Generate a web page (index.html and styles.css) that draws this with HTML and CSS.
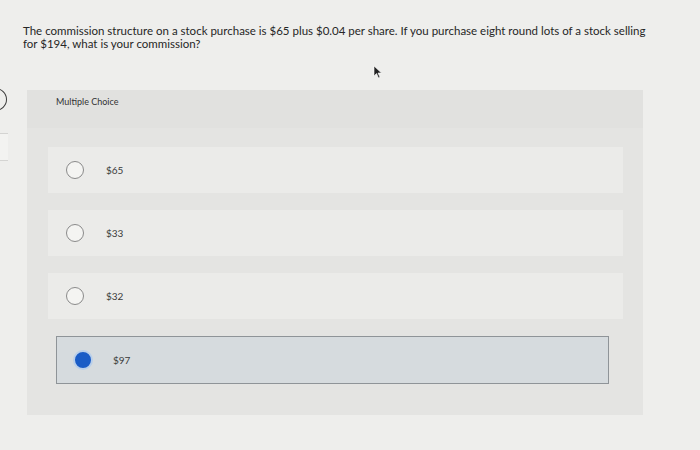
FILE: index.html
```html
<!DOCTYPE html>
<html>
<head>
<meta charset="utf-8">
<link rel="stylesheet" href="styles.css">
</head>
<body>
<div class="page">
  <aside class="rail">
    <div class="rail-step"></div>
    <div class="rail-box"></div>
  </aside>
  <main class="main">
    <p class="question">The commission structure on a stock purchase is $65 plus $0.04 per share. If you purchase eight round lots of a stock selling for $194, what is your commission?</p>
    <div class="pointer-row">
      <svg class="pointer" width="10" height="14" viewBox="0 0 10 14"><path d="M1 1 L1 11 L3.5 8.5 L5.5 13 L7 12.3 L5 8 L8.5 8 Z" fill="#222" stroke="#fff" stroke-width="0.6"/></svg>
    </div>
    <section class="panel">
      <div class="panel-head">Multiple Choice</div>
      <div class="options">
        <div class="option"><span class="radio"></span><span class="label">$65</span></div>
        <div class="option"><span class="radio"></span><span class="label">$33</span></div>
        <div class="option"><span class="radio"></span><span class="label">$32</span></div>
        <div class="option selected"><span class="radio"></span><span class="label">$97</span></div>
      </div>
    </section>
  </main>
</div>
</body>
</html>
```
FILE: styles.css
```css
html, body {
  margin: 0;
  padding: 0;
  width: 700px;
  height: 450px;
  overflow: hidden;
  background: #eeeeec;
  font-family: Lato, "Liberation Sans", sans-serif;
  color: #2b2b2b;
}
.page {
  display: flex;
  height: 450px;
}
.rail {
  width: 8px;
  flex: none;
  overflow: hidden;
  padding-top: 88px;
}
.rail-step {
  width: 24px;
  height: 23px;
  margin-left: -17px;
  border: 1.5px solid #3a3a3a;
  border-radius: 50%;
  box-sizing: border-box;
}
.rail-box {
  width: 16px;
  height: 26px;
  margin-top: 22px;
  margin-left: -8px;
  border: 1px solid #d4d4d2;
  background: #f3f3f1;
}
.main {
  flex: 1;
  padding: 24px 0 0 15px;
}
.question {
  margin: 0;
  width: 632px;
  font-size: 11.5px;
  line-height: 13px;
  color: #262626;
}
.pointer-row {
  height: 40px;
  position: relative;
}
.pointer {
  position: absolute;
  left: 350px;
  top: 15px;
}
.panel {
  margin-left: 4px;
  width: 616px;
  background: #e4e4e2;
  padding-bottom: 31px;
}
.panel-head {
  height: 38px;
  padding: 6px 0 0 29px;
  font-size: 9px;
  line-height: 12px;
  color: #333;
  background: #e1e1df;
  box-sizing: border-box;
}
.options {
  display: flex;
  flex-direction: column;
  gap: 17px;
  padding: 19px 20px 0 21px;
}
.option {
  height: 46px;
  background: #ebebe9;
  display: flex;
  align-items: center;
  padding-left: 18px;
  box-sizing: border-box;
}
.radio {
  width: 18px;
  height: 18px;
  border: 1.3px solid #8a8a8a;
  border-radius: 50%;
  box-sizing: border-box;
  background: #f4f4f2;
  flex: none;
}
.label {
  margin-left: 22px;
  font-size: 10px;
  color: #3a3a3a;
}
.option.selected {
  margin: 0 14px 0 8px;
  height: 48px;
  background: #d6dbde;
  border: 1px solid #8f9498;
  padding-left: 16px;
}
.option.selected .radio {
  width: 20px;
  height: 20px;
  border: 2px solid #b9cfea;
  background: #1a5cc6;
}
.option.selected .label {
  margin-left: 20px;
}
```
